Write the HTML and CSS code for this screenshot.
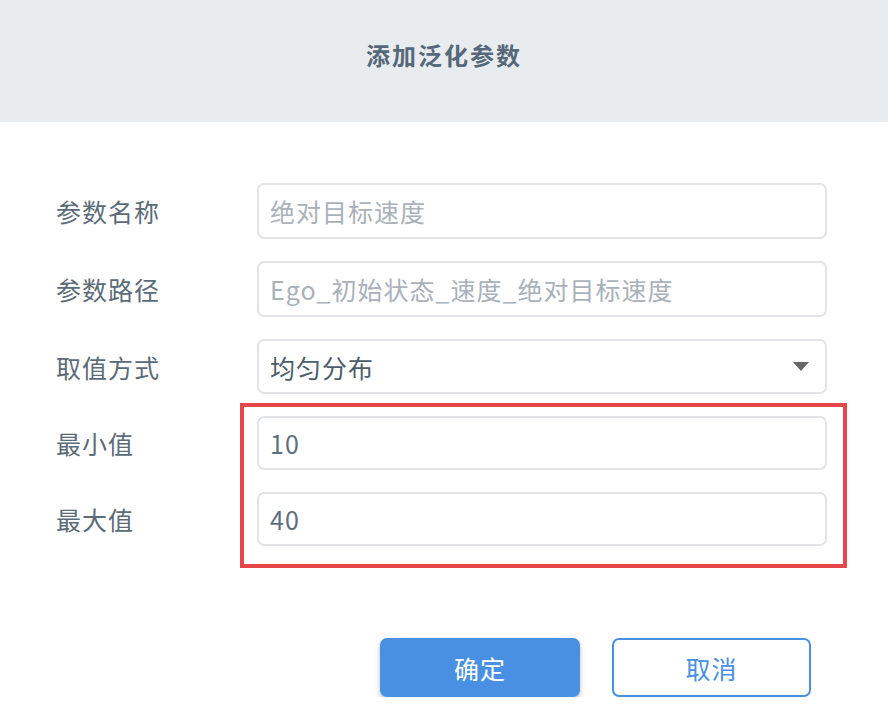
FILE: index.html
```html
<!DOCTYPE html>
<html lang="zh-CN">
<head>
    <meta charset="UTF-8">
    <meta name="viewport" content="width=device-width, initial-scale=1.0">
    <title>添加泛化参数</title>
    <link rel="stylesheet" href="styles.css">
</head>
<body>
    <div class="dialog">
        <div class="dialog-header">
            <h1>添加泛化参数</h1>
        </div>

        <form class="dialog-body">
            <div class="form-row">
                <label>参数名称</label>
                <input type="text" class="field" placeholder="绝对目标速度">
            </div>
            <div class="form-row">
                <label>参数路径</label>
                <input type="text" class="field" placeholder="Ego_初始状态_速度_绝对目标速度">
            </div>
            <div class="form-row">
                <label>取值方式</label>
                <div class="field select">
                    <span>均匀分布</span>
                    <span class="caret"></span>
                </div>
            </div>
            <div class="form-row range-row">
                <label>最小值</label>
                <input type="text" class="field" value="10">
            </div>
            <div class="form-row range-row">
                <label>最大值</label>
                <input type="text" class="field" value="40">
            </div>

            <!-- highlight around the range fields -->
            <div class="highlight"></div>
        </form>

        <div class="dialog-footer">
            <button class="btn btn-primary">确定</button>
            <button class="btn btn-plain">取消</button>
        </div>
    </div>
</body>
</html>
```

FILE: styles.css
```css
* {
    margin: 0;
    padding: 0;
    box-sizing: border-box;
}

body {
    font-family: "Noto Sans CJK SC", "Noto Sans", sans-serif;
    background: #fff;
    color: #5b6b78;
}

.dialog {
    width: 888px;
}

.dialog-header {
    height: 122px;
    padding-bottom: 14px;
    background: #e8ecef;
    display: flex;
    justify-content: center;
    align-items: center;
}

.dialog-header h1 {
    font-size: 24px;
    font-weight: 700;
    color: #56687a;
    letter-spacing: 2px;
}

.dialog-body {
    position: relative;
    padding-top: 61px;
    display: flex;
    flex-direction: column;
    gap: 22px;
}

.form-row {
    display: flex;
    align-items: center;
}

.form-row label {
    width: 257px;
    padding-left: 56px;
    font-size: 25px;
    color: #5b6b78;
    letter-spacing: 1px;
}

.field {
    width: 570px;
    height: 56px;
    border: 2px solid #e2e4e7;
    border-radius: 7px;
    padding: 0 11px;
    font-family: inherit;
    font-size: 25px;
    letter-spacing: 1px;
    color: #5d6f7e;
    background: #fff;
    outline: none;
}

.field::placeholder {
    color: #a9b1b9;
}

.select {
    height: 55px;
    display: flex;
    align-items: center;
    justify-content: space-between;
    color: #4d5d6b;
}

.range-row .field {
    height: 54px;
}

.caret {
    width: 0;
    height: 0;
    border-left: 8px solid transparent;
    border-right: 8px solid transparent;
    border-top: 9px solid #666;
    margin-right: 5px;
}

.highlight {
    position: absolute;
    left: 240px;
    top: 281px;
    width: 607px;
    height: 165px;
    border: 4px solid #e5464a;
    pointer-events: none;
}

.dialog-footer {
    display: flex;
    justify-content: flex-end;
    gap: 32px;
    padding: 92px 77px 0 0;
}

.btn {
    width: 200px;
    height: 59px;
    border-radius: 7px;
    font-family: inherit;
    font-size: 25px;
    letter-spacing: 1px;
    cursor: pointer;
}

.btn-primary {
    background: #4a90e2;
    border: none;
    color: #fff;
    box-shadow: 0 3px 5px rgba(0, 0, 0, 0.25);
}

.btn-plain {
    background: #fff;
    border: 2px solid #4a90e2;
    color: #4a90e2;
    width: 199px;
}
```
